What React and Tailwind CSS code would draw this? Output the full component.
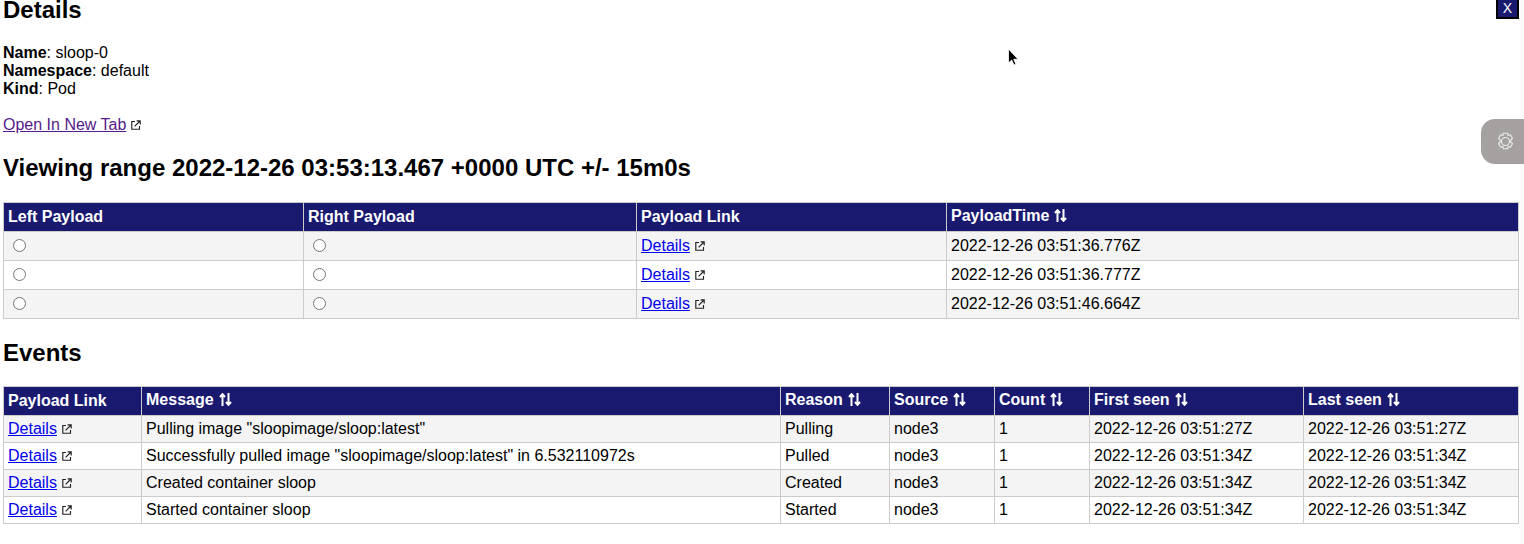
const payloads = ["2022-12-26 03:51:36.776Z", "2022-12-26 03:51:36.777Z", "2022-12-26 03:51:46.664Z"];

const events = [
  { message: 'Pulling image "sloopimage/sloop:latest"', reason: "Pulling", first: "2022-12-26 03:51:27Z", last: "2022-12-26 03:51:27Z" },
  { message: 'Successfully pulled image "sloopimage/sloop:latest" in 6.532110972s', reason: "Pulled", first: "2022-12-26 03:51:34Z", last: "2022-12-26 03:51:34Z" },
  { message: "Created container sloop", reason: "Created", first: "2022-12-26 03:51:34Z", last: "2022-12-26 03:51:34Z" },
  { message: "Started container sloop", reason: "Started", first: "2022-12-26 03:51:34Z", last: "2022-12-26 03:51:34Z" },
];

function ExternalIcon() {
  return (
    <svg className="inline-block ml-[5px] align-[0px]" width="10" height="10" viewBox="0 0 10 10" fill="none" stroke="#222" strokeWidth="1.15">
      <path d="M4 1.5H.8v7.7h7.7V6" />
      <path d="M3.6 6.4 9 1M5.6.8h3.6v3.6" />
    </svg>
  );
}

function SortIcon() {
  return (
    <svg className="inline-block ml-[5px] align-[-1px]" width="13" height="13" viewBox="0 0 13 13" fill="none" stroke="#fff" strokeWidth="2">
      <path d="M3.5 13V1.5M1 4l2.5-2.8L6 4" />
      <path d="M9.5 0v11.5M7 9l2.5 2.8L12 9" />
    </svg>
  );
}

function Th({ children, width, sort }) {
  return (
    <th className={`${width} border border-[#ccc] bg-[#191970] px-[4px] text-left font-bold text-white ${sort ? "pt-[4px] pb-[6px]" : "pt-[5px] pb-[5px]"}`}>
      {children}
      {sort && <SortIcon />}
    </th>
  );
}

function Td({ children, tall }) {
  return <td className={`border border-[#ccc] px-[4px] ${tall ? "py-[5px]" : "py-[4px]"}`}>{children}</td>;
}

function DetailsLink() {
  return (
    <>
      <a href="#" className="text-[#0000ee] underline">Details</a>
      <ExternalIcon />
    </>
  );
}

function Radio() {
  return <span className="ml-[5px] inline-block h-[13px] w-[13px] rounded-full border border-[#767676] bg-white align-[-1px]" />;
}

export default function App() {
  return (
    <div className="relative h-[544px] overflow-hidden bg-white pl-[3px] font-['Liberation_Sans',Arial,sans-serif] text-[16px] leading-[18px] text-black">
      <h2 className="h-[44px] text-[24px] leading-[20px] font-bold">Details</h2>
      <div>
        <div><b>Name</b>: sloop-0</div>
        <div><b>Namespace</b>: default</div>
        <div><b>Kind</b>: Pod</div>
      </div>
      <div className="mt-[18px]">
        <a href="#" className="text-[#551a8b] underline">Open In New Tab</a>
        <ExternalIcon />
      </div>
      <h2 className="mt-[20px] text-[24px] leading-[28px] font-bold">Viewing range 2022-12-26 03:53:13.467 +0000 UTC +/- 15m0s</h2>

      <table className="mt-[20px] w-[1515px] table-fixed border-collapse">
        <thead>
          <tr>
            <Th width="w-[300px]">Left Payload</Th>
            <Th width="w-[333px]">Right Payload</Th>
            <Th width="w-[310px]">Payload Link</Th>
            <Th width="w-[572px]" sort>PayloadTime</Th>
          </tr>
        </thead>
        <tbody>
          {payloads.map((time, i) => (
            <tr key={time} className={i % 2 === 0 ? "bg-[#f4f4f4]" : "bg-white"}>
              <Td tall><Radio /></Td>
              <Td tall><Radio /></Td>
              <Td tall><DetailsLink /></Td>
              <Td tall>{time}</Td>
            </tr>
          ))}
        </tbody>
      </table>

      <h2 className="mt-[20px] text-[24px] leading-[28px] font-bold">Events</h2>

      <table className="mt-[19px] w-[1515px] table-fixed border-collapse">
        <thead>
          <tr>
            <Th width="w-[138px]">Payload Link</Th>
            <Th width="w-[639px]" sort>Message</Th>
            <Th width="w-[109px]" sort>Reason</Th>
            <Th width="w-[105px]" sort>Source</Th>
            <Th width="w-[95px]" sort>Count</Th>
            <Th width="w-[214px]" sort>First seen</Th>
            <Th width="w-[215px]" sort>Last seen</Th>
          </tr>
        </thead>
        <tbody>
          {events.map((ev, i) => (
            <tr key={ev.message} className={i % 2 === 0 ? "bg-[#f4f4f4]" : "bg-white"}>
              <Td><DetailsLink /></Td>
              <Td>{ev.message}</Td>
              <Td>{ev.reason}</Td>
              <Td>node3</Td>
              <Td>1</Td>
              <Td>{ev.first}</Td>
              <Td>{ev.last}</Td>
            </tr>
          ))}
        </tbody>
      </table>

      {/* faint strip along the right edge */}
      <div className="absolute top-0 right-0 bottom-0 w-[4px] bg-[#fafafa]" />

      {/* close button */}
      <button className="absolute top-[-4px] right-[5px] h-[23px] w-[23px] border-2 border-black bg-[#191970] text-[14px] leading-[20px] text-white">X</button>

      {/* settings tab */}
      <div className="absolute top-[119px] right-0 flex h-[45px] w-[43px] items-center justify-center rounded-l-[14px] bg-[#a5a1a0] pl-[5px]">
        <svg width="19" height="19" viewBox="0 0 19 19" fill="none" stroke="#eee" strokeWidth="1.1">
          <path d="M7.4 1.2h4.2l.6 2.3 2.2-.7 2.1 3.5-1.7 1.7v2l1.7 1.7-2.1 3.5-2.2-.7-.6 2.3H7.4l-.6-2.3-2.2.7-2.1-3.5 1.7-1.7v-2L2.5 6.3l2.1-3.5 2.2.7z" strokeLinejoin="round" />
          <circle cx="9.5" cy="9.5" r="4" />
        </svg>
      </div>

      {/* mouse cursor */}
      <svg className="absolute top-[48px] left-[1007px]" width="13" height="19" viewBox="0 0 13 19">
        <path d="M1.5 1v14l3.2-3 2.2 5 2-.9-2.2-4.8h4.3z" fill="#000" stroke="#fff" strokeWidth="0.8" />
      </svg>
    </div>
  );
}
